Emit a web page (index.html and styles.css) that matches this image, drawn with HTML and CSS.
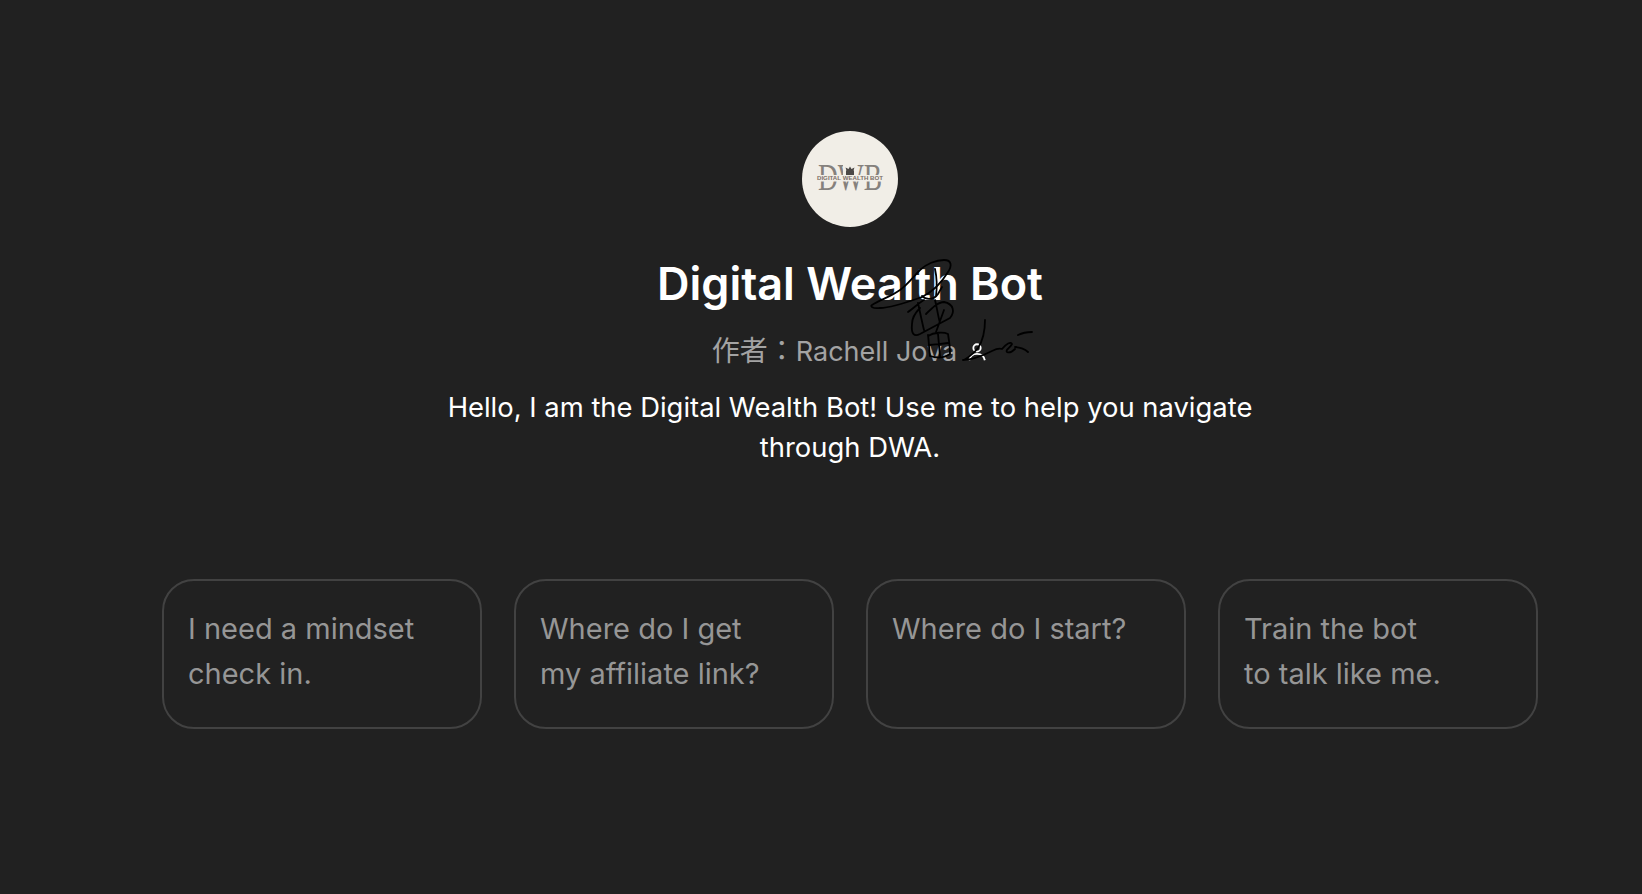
FILE: index.html
```html
<!DOCTYPE html>
<html lang="en">
<head>
    <meta charset="UTF-8">
    <meta name="viewport" content="width=device-width, initial-scale=1.0">
    <title>Digital Wealth Bot</title>
    <link rel="stylesheet" href="styles.css">
</head>
<body>
    <main class="page">
        <!-- Bot intro -->
        <section class="intro">
            <div class="avatar">
                <svg class="logo" viewBox="0 0 96 96" width="96" height="96">
                    <text class="logo-dwb" x="48" y="59" text-anchor="middle" textLength="64" lengthAdjust="spacingAndGlyphs">DWB</text>
                    <rect x="41" y="30" width="14" height="14" fill="#f1eee7"></rect>
                    <path class="logo-crown" d="M44 39.500h8v4.500h-8z M44.500 39.500l-1-3 3 1.500 1.500-2.500 1.500 2.500 3-1.500-1 3z"></path>
                    <rect x="14" y="44" width="68" height="6.500" fill="#f1eee7"></rect>
                    <text class="logo-name" x="48" y="48.500" text-anchor="middle" textLength="66" lengthAdjust="spacingAndGlyphs">DIGITAL WEALTH BOT</text>
                </svg>
            </div>
            <h1 class="bot-name">Digital Wealth Bot</h1>
            <div class="author">
                <span><span class="author-label">作者：</span>Rachell Jova</span>
                <svg class="author-icon" viewBox="0 0 24 24" width="22" height="22">
                    <circle cx="12" cy="7.500" r="4"></circle>
                    <path d="M3.500 21c.8-4.500 4-7 8.500-7s7.700 2.500 8.500 7"></path>
                </svg>
            </div>
            <p class="bot-desc">Hello, I am the Digital Wealth Bot! Use me to help you navigate through DWA.</p>
        </section>

        <!-- Suggested prompts -->
        <section class="prompts">
            <div class="prompt-card">I need a mindset<br>check in.</div>
            <div class="prompt-card">Where do I get<br>my affiliate link?</div>
            <div class="prompt-card">Where do I start?</div>
            <div class="prompt-card">Train the bot<br>to talk like me.</div>
        </section>
    </main>

    <!-- Handwritten signature lying over the page -->
    <svg class="signature" viewBox="0 0 190 120" width="190" height="120">
        <path d="M12 55C20 50 32 46 40 40C48 34 54 26 60 20C66 14 76 10 84 10C92 10 92 16 88 22C82 32 72 42 62 47C48 52 30 58 20 58C12 59 10 56 12 55"></path>
        <path d="M75 19C77 28 77 38 76 46M62 46C66 50 74 50 78 44L82 37"></path>
        <path d="M48 62C54 58 60 52 64 50M52 74C51 84 54 87 60 84L90 68C95 62 94 54 84 52C78 52 72 58 66 64M58 53C60 62 62 72 64 80M75 50C77 58 78 66 80 73M84 60L76 82M52 74C52 68 56 62 60 58"></path>
        <path d="M68 85C69 92 69 100 70 106M68 86C74 82 84 82 88 84C89 90 90 98 90 104C84 108 76 108 70 106M69 95C76 94 82 94 88 93M78 84L80 106"></path>
        <path d="M125 70C125 82 122 92 118 98C112 106 104 110 103 110C112 110 122 106 132 101C136 99 139 98 142 99C146 94 151 91 152 94C150 98 145 100 147 102C149 103 152 102 155 99"></path>
        <path d="M155 97C159 97 165 99 168 102M158 85C162 83 168 82 172 82"></path>
    </svg>
</body>
</html>
```

FILE: styles.css
```css
:root {
    --bg: #212121;
    --light: #ffffff;
    --muted: #a3a3a3;
    --card-text: #969696;
    --border: #424242;
}

* {
    margin: 0;
    padding: 0;
    box-sizing: border-box;
    font-family: 'Inter', 'Noto Sans CJK TC', sans-serif;
}

html, body {
    height: 100%;
}

body {
    background: var(--bg);
    overflow: hidden;
    position: relative;
}

.page {
    padding: 131px 104px 0 162px;
}

.intro {
    display: flex;
    flex-direction: column;
    align-items: center;
    text-align: center;
}

.avatar {
    width: 96px;
    height: 96px;
    border-radius: 50%;
    background: #f1eee7;
}

.logo {
    display: block;
}

.logo-dwb {
    font-family: 'Liberation Serif', serif;
    font-size: 38px;
    fill: #85817d;
}

.logo-name {
    font-family: 'Liberation Sans', sans-serif;
    font-size: 4.500px;
    font-weight: 700;
    fill: #7d6e68;
}

.logo-crown {
    fill: #4b4846;
}

.bot-name {
    margin-top: 29px;
    font-size: 45px;
    line-height: 56px;
    font-weight: 600;
    color: var(--light);
}

.author {
    display: flex;
    align-items: center;
    gap: 9px;
    margin-top: 19px;
    font-size: 27px;
    line-height: 40px;
    color: var(--muted);
}

.author-label {
    font-size: 28px;
}

.author-icon {
    fill: none;
    stroke: var(--light);
    stroke-width: 2;
}

.bot-desc {
    width: 830px;
    margin-top: 15px;
    font-size: 27.400px;
    line-height: 40px;
    color: var(--light);
}

.prompts {
    display: grid;
    grid-template-columns: repeat(4, 320px);
    gap: 32px;
    margin-top: 112px;
}

.prompt-card {
    height: 150px;
    padding: 25px 24px;
    border: 2px solid var(--border);
    border-radius: 32px;
    font-size: 29px;
    line-height: 45px;
    color: var(--card-text);
}

.signature {
    position: absolute;
    left: 860px;
    top: 250px;
    fill: none;
    stroke: #000000;
    stroke-width: 1.800;
    stroke-linecap: round;
    stroke-linejoin: round;
}
```
